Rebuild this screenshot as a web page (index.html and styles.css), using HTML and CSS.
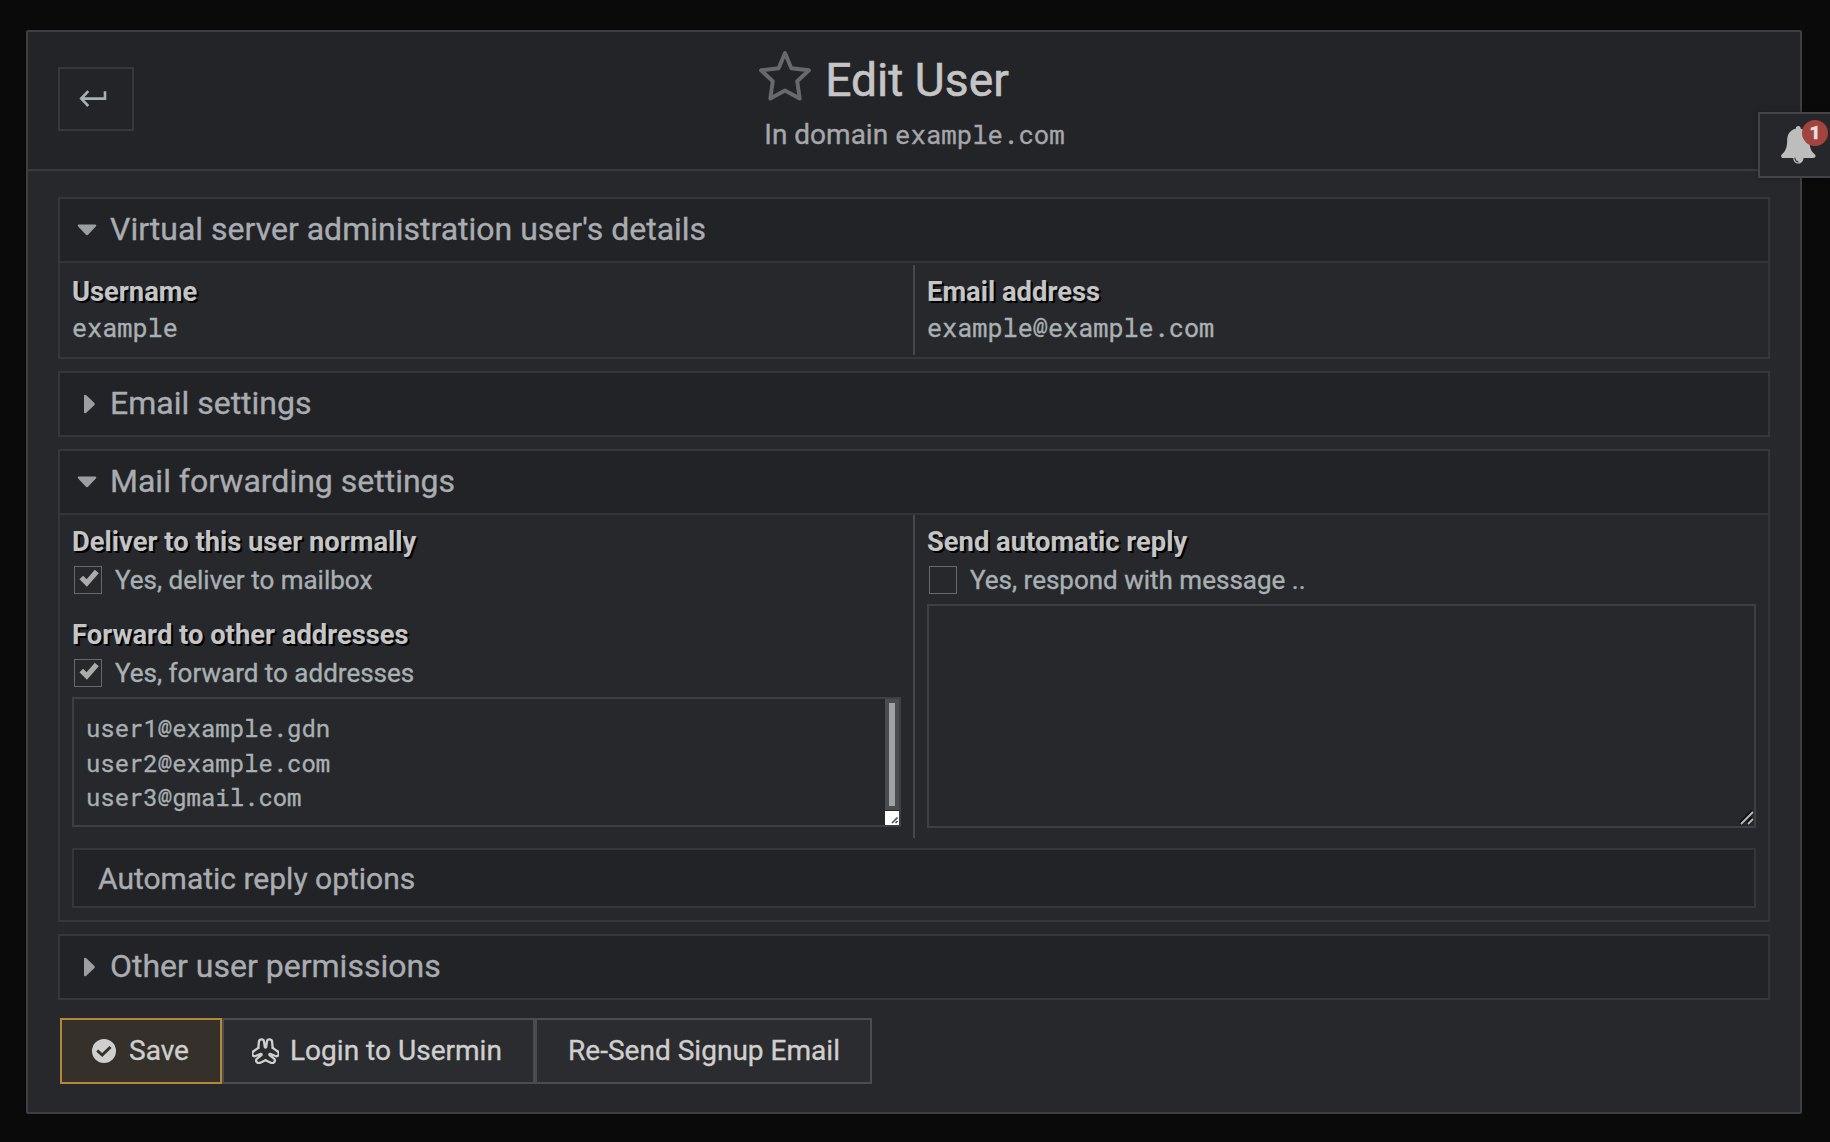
FILE: index.html
```html
<!DOCTYPE html>
<html lang="en">
<head>
<meta charset="utf-8">
<title>Edit User</title>
<link rel="stylesheet" href="styles.css">
</head>
<body>
<main class="panel">
  <header class="panel-header">
    <button class="back" type="button" aria-label="Back">
      <svg width="28" height="18" viewBox="0 0 28 18" fill="none" stroke="currentColor" stroke-width="2.6"><path d="M9.300 1.200L2.200 8.600L9.300 16M2.200 8.600H26V1.300"/></svg>
    </button>
    <div class="titles">
      <div class="title-row">
        <svg class="star" width="52" height="50" viewBox="0 0 52 50" fill="none" stroke="currentColor" stroke-width="3.900" stroke-linejoin="round"><path d="M26 2L32.300 17.300L50 19.300L38.200 30.300L40.700 47.500L26 39.500L11.300 47.500L13.800 30.300L2 19.300L19.700 17.300Z"/></svg>
        <h1>Edit User</h1>
      </div>
      <p class="subtitle">In domain <span class="mono">example.com</span></p>
    </div>
  </header>

  <div class="panel-body">
    <section class="section">
      <h2><svg class="caret" width="20" height="20" viewBox="0 0 20 20"><path d="M2 4.500H18Q20.200 4.700 18.600 6.800L11.300 14.600Q10 15.700 8.700 14.600L1.400 6.800Q-.2 4.700 2 4.500Z"/></svg>Virtual server administration user's details</h2>
      <div class="columns columns-short">
        <div class="cell"><div class="label">Username</div><div class="value mono">example</div></div>
        <div class="cell"><div class="label">Email address</div><div class="value mono">example@example.com</div></div>
      </div>
    </section>

    <section class="section collapsed">
      <h2><svg class="caret" width="20" height="20" viewBox="0 0 20 20"><path d="M6 2Q6.200-.2 8.300 1.300L16.200 8.700Q17.300 10 16.200 11.300L8.300 18.700Q6.200 20.200 6 18Z"/></svg>Email settings</h2>
    </section>

    <section class="section">
      <h2><svg class="caret" width="20" height="20" viewBox="0 0 20 20"><path d="M2 4.500H18Q20.200 4.700 18.600 6.800L11.300 14.600Q10 15.700 8.700 14.600L1.400 6.800Q-.2 4.700 2 4.500Z"/></svg>Mail forwarding settings</h2>
      <div class="columns">
        <div class="cell">
          <div class="label">Deliver to this user normally</div>
          <div class="check"><span class="box"><svg width="26" height="26" viewBox="0 0 26 26" fill="none" stroke="currentColor" stroke-width="5.200"><path d="M6.300 10.500L11.800 16L21.800 4.500"/></svg></span>Yes, deliver to mailbox</div>
          <div class="label label-next">Forward to other addresses</div>
          <div class="check"><span class="box"><svg width="26" height="26" viewBox="0 0 26 26" fill="none" stroke="currentColor" stroke-width="5.200"><path d="M6.300 10.500L11.800 16L21.800 4.500"/></svg></span>Yes, forward to addresses</div>
          <div class="area addresses">
            <div class="lines mono">user1@example.gdn<br>user2@example.com<br>user3@gmail.com</div>
            <div class="scroll">
              <div class="track"><div class="thumb"></div></div>
              <svg class="corner" width="14" height="14" viewBox="0 0 14 14" fill="none" stroke="#4c4c4c" stroke-width="1.600"><path d="M7 12L12.500 6.500M10.500 12L12.500 10"/></svg>
            </div>
          </div>
        </div>
        <div class="cell">
          <div class="label">Send automatic reply</div>
          <div class="check"><span class="box"></span>Yes, respond with message ..</div>
          <div class="area message">
            <svg width="15" height="15" viewBox="0 0 15 15" fill="none"><path d="M1.500 13.500L13.500 1.500M8.500 13.500L13.500 8.500" stroke="#0c0c0d" stroke-width="4"/><path d="M2 14L14 2M9 14L14 9" stroke="#b9b9b9" stroke-width="1.900"/></svg>
          </div>
        </div>
      </div>
      <div class="options">Automatic reply options</div>
    </section>

    <section class="section collapsed">
      <h2><svg class="caret" width="20" height="20" viewBox="0 0 20 20"><path d="M6 2Q6.200-.2 8.300 1.300L16.200 8.700Q17.300 10 16.200 11.300L8.300 18.700Q6.200 20.200 6 18Z"/></svg>Other user permissions</h2>
    </section>

    <div class="actions">
      <button class="btn save" type="button"><svg width="24" height="24" viewBox="0 0 24 24"><circle cx="12" cy="12" r="12" fill="currentColor"/><path d="M5.200 11.500L10.200 16L18.500 8" fill="none" stroke="#35312a" stroke-width="3"/></svg>Save</button>
      <button class="btn login" type="button"><svg width="27" height="26" viewBox="-1 0 81 78" fill="none" stroke="currentColor" stroke-width="7" stroke-linejoin="round" stroke-linecap="round"><path id="lobe" d="M18 29.600L19.500 14C19 2 34 1 35 10L37.500 27Q39.500 30 41.500 27L44 10C45 1 60 2 59.500 14L61 29.600"/><use href="#lobe" transform="rotate(120 39.500 42)"/><use href="#lobe" transform="rotate(240 39.500 42)"/></svg>Login to Usermin</button>
      <button class="btn resend" type="button">Re-Send Signup Email</button>
    </div>
  </div>
</main>

<aside class="notifications" aria-label="Notifications">
  <svg class="bell" width="35" height="38" viewBox="0 0 35 38"><path fill="currentColor" d="M17.200 0C18.800 0 19.700 1 19.700 2.700C25.500 3.900 28.500 8.500 28.500 14C28.500 22.500 30.500 25.500 33.500 28C35.400 29.800 34.600 32 32 32H22.500C22.500 35.500 20 37.500 17.300 37.500C14.500 37.500 12.200 35.500 12.200 32H2.500C0 32-.6 29.800 1.200 28C4.200 25.500 6.200 22 6.200 14C6.200 8.500 9 3.900 14.800 2.700C14.800 1 15.700 0 17.200 0Z"/><path d="M13.800 31.600C14 34.300 15.500 35.700 17.600 35.900" fill="none" stroke="#3c3d40" stroke-width="1.200"/></svg>
  <span class="badge">1</span>
</aside>
</body>
</html>
```
FILE: styles.css
```css
* { box-sizing: border-box; }

body {
  margin: 0;
  min-height: 1142px;
  padding: 30px 28px 28px 26px;
  background: #0a0a0a;
  color: #a9b0b3;
  font-family: Roboto, sans-serif;
  font-size: 26px;
  overflow: hidden;
  -webkit-text-stroke: .35px currentColor;
}

h1, h2, p { margin: 0; font-weight: 400; }
svg { display: block; flex: none; }
button { font: inherit; }
.mono { font-family: "Roboto Mono", "Liberation Mono", monospace; }

.panel {
  height: 1084px;
  background: #27282c;
  border: 2px solid #3e3f43;
  border-radius: 2px;
}

.panel-header {
  display: grid;
  grid-template-columns: 1fr auto 1fr;
  height: 139px;
  padding: 0 30px;
  background: #232428;
  border-bottom: 2px solid #3a3b3f;
}

.back {
  display: flex;
  align-items: center;
  width: 76px;
  height: 64px;
  margin-top: 35px;
  padding: 0 0 0 19px;
  background: transparent;
  border: 2px solid #37383c;
  color: #a9b0b4;
}

.titles { display: flex; flex-direction: column; align-items: center; }
.title-row { display: flex; gap: 14px; height: 90px; padding-right: 60px; }
.star { margin-top: 19px; color: #69696b; }
h1 { font-size: 46.2px; line-height: 96px; color: #c5c5c5; -webkit-text-stroke-width: .6px; }
.subtitle { padding-left: 1px; font-size: 28px; line-height: 25px; color: #a5a7ab; }
.subtitle .mono { font-size: 25.7px; }

.panel-body { padding: 26px 30px 0; }

.section { margin-bottom: 12px; border: 2px solid #36373b; }
.section h2 {
  display: flex;
  align-items: center;
  gap: 13px;
  height: 64px;
  padding: 0 17px 1px;
  background: #222327;
  border-bottom: 2px solid #34353a;
  font-size: 32px;
  line-height: 61px;
  color: #a9acb0;
}
.section.collapsed h2 { height: 62px; border-bottom: 0; }
.caret { fill: #9c9fa2; }
.collapsed .caret { margin: 0 -1px 0 1px; }

.columns { display: grid; grid-template-columns: 855px 1fr; height: 323px; }
.columns-short { height: 94px; padding: 2px 0; }
.cell { padding: 8px 12px 0; }
.cell:first-child { border-right: 2px solid #47484b; }

.label {
  font-size: 27.35px;
  font-weight: 700;
  line-height: 38px;
  color: #c5c5c5;
  text-shadow: 2px 2px 0 #000;
  -webkit-text-stroke-width: 0;
}
.label-next { margin-top: 17px; }
.value { font-size: 25.2px; line-height: 33px; }

.check { display: flex; align-items: center; height: 38px; padding-left: 2px; gap: 13px; }
.box { width: 28px; height: 28px; border: 1px solid #67686b; color: #ababab; }

.area { margin-top: 5px; border: 2px solid #3e3f42; }
.addresses { display: flex; height: 130px; }
.lines { flex: 1; padding: 12px 12px 0; font-size: 23.95px; line-height: 34.5px; }
.scroll { display: flex; flex-direction: column; gap: 1px; width: 14px; }
.track { height: 111px; padding: 4px; background: #4a4d50; }
.thumb { height: 103px; background: #a0a1a3; }
.corner { background: #fff; }
.message { display: flex; justify-content: flex-end; align-items: flex-end; height: 224px; padding: 0 0 1px 0; }

.options {
  height: 60px;
  margin: 10px 12px 12px;
  padding: 0 24px;
  background: #222327;
  border: 2px solid #36373b;
  font-size: 30px;
  line-height: 57px;
  color: #a9acb0;
}

.actions { display: flex; margin: 18px 0 0 2px; }
.btn {
  display: flex;
  align-items: center;
  height: 66px;
  padding: 0 0 1px;
  background: #2b2c30;
  border: 2px solid #4b4c4f;
  color: #cfcfcf;
  font-size: 28.05px;
  white-space: nowrap;
  -webkit-text-stroke: .35px currentColor;
}
.save { width: 162px; padding-left: 30px; gap: 13px; background: #35312a; border-color: #b28a37; }
.login { width: 313px; padding-left: 28px; gap: 11px; }
.resend { width: 337px; padding-left: 31px; }

.notifications {
  position: absolute;
  top: 112px;
  right: 0;
  width: 72px;
  height: 66px;
  padding: 12px 0 0 21px;
  background: #26272b;
  border: 2px solid #434448;
  border-right: 0;
  box-shadow: 0 0 6px rgba(0, 0, 0, .25);
}
.bell { color: #bdbdbd; }
.badge {
  position: absolute;
  top: 6px;
  left: 42px;
  width: 26px;
  height: 26px;
  border-radius: 50%;
  background: #a3433e;
  color: #e4dede;
  font-size: 19px;
  font-weight: 900;
  line-height: 25px;
  text-align: center;
}
```
